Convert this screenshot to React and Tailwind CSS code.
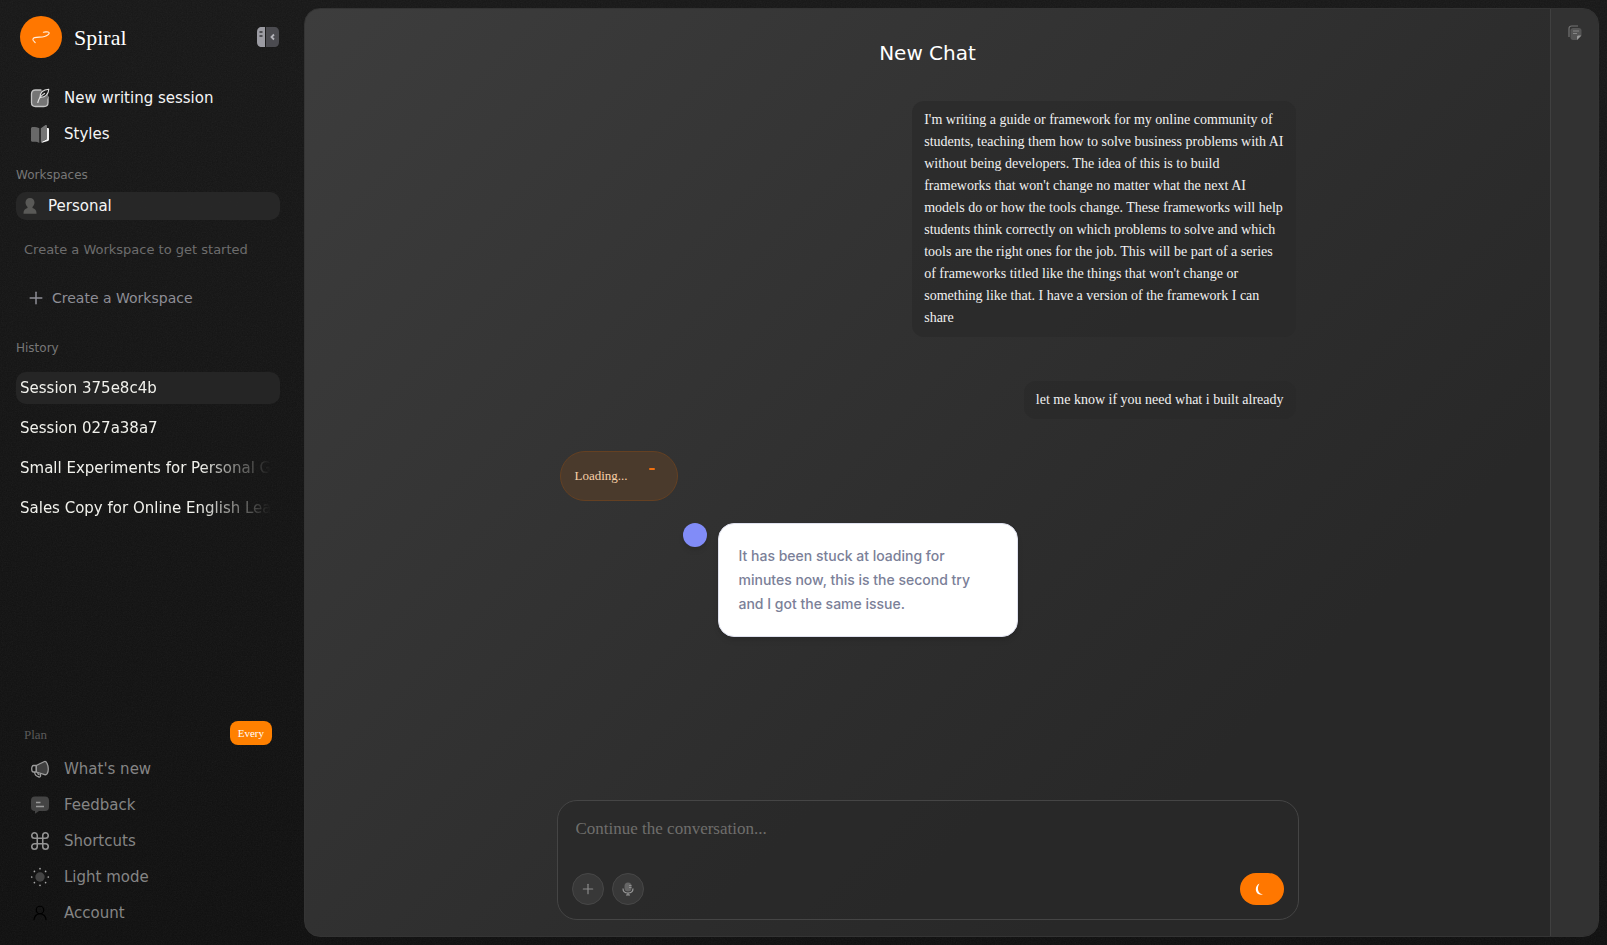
import React from 'react';
import { Command, Plus, UserRound } from 'lucide-react';

function LogoMark() {
  return (
    <span className="flex size-[42px] items-center justify-center rounded-full bg-[#ff7700]">
      <svg width="20" height="16" viewBox="0 0 20 16" fill="none" stroke="#fff1e2" strokeWidth="1.1" strokeLinecap="round" strokeLinejoin="round">
        <path d="M4.2 13.6 2.3 11.5c-.9-1.300-.2-2.500 1.500-2.900 3.200-.7 6.500-.2 9.700-1.100 2-.600 4.400-1.600 4.700-3.300.2-1.200-1.900-1.500-3.400-1.300L12.400 3.300" />
      </svg>
    </span>
  );
}

function CollapseIcon() {
  return (
    <svg width="22" height="20" viewBox="0 0 22 20">
      <path d="M5 0h3v20H5c-3.500 0-5-2-5-5V5c0-3 1.500-5 5-5Z" fill="#9c9ca3" />
      <path d="M9 0h8c3.500 0 5 2 5 5v10c0 3-1.500 5-5 5H9Z" fill="#4b4b50" />
      <path d="M2.500 5h3M2.500 9h3" stroke="#36363a" strokeWidth="1.500" />
      <path d="m17 7.500-2.500 2.500 2.500 2.500" fill="none" stroke="#b4b4ba" strokeWidth="1.800" />
    </svg>
  );
}

function WriteIcon() {
  return (
    <svg width="20" height="20" viewBox="0 0 20 20" fill="none" strokeLinecap="round" strokeLinejoin="round">
      <path d="M11 2H5.500C3 2 1.500 3.500 1.500 6v8.500c0 2.500 1.500 4 4 4H14c2.500 0 4-1.500 4-4V9" fill="#757575" stroke="#c4c4c4" strokeWidth="1.300" />
      <path d="M11 2.500h3l4 4v4H9Z" fill="#757575" />
      <path d="M10 9.500C10 5 13 1.700 18.800 1.300c-.3 4.500-2.800 7.700-8.300 8.200Z" fill="#1c1c1c" stroke="#dedede" strokeWidth="1.100" />
      <path d="M7.800 14.500c1-4 3-7 6.700-9" stroke="#dedede" strokeWidth="1.200" />
    </svg>
  );
}

function BookIcon() {
  return (
    <svg width="20" height="20" viewBox="0 0 20 20">
      <path d="M16.500 4h1.300c.8 0 1.200.4 1.200 1.200v10.600c0 .700-.4 1.100-1.100 1.300l-5.900 1.600-1-1 5.500-2.200Z" fill="#f4f4f4" />
      <path d="M3 3c2.500 0 5 .3 6.300 1.200V19C7.500 17.500 5 17.600 2.200 17.800c-.8 0-1.200-.4-1.200-1.200V4.500C1 3.500 1.800 3 3 3Z" fill="#686868" />
      <path d="m10.800 4.200 4-2.700c1.300-.8 2.200-.3 2.200 1v11c0 1-.4 1.700-1.400 2.200L10.800 18.500Z" fill="#757575" />
    </svg>
  );
}

function PersonIcon() {
  return (
    <svg width="14" height="16" viewBox="0 0 14 16" fill="#595957">
      <path d="M7 0c2.700 0 4.500 1.800 4.500 4.500 0 1.900-.9 3.500-2 4.400v1C12 10.600 13.500 12 13.500 15v.7H.500V15c0-3 1.500-4.400 4-5.100v-1c-1.100-.9-2-2.500-2-4.400C2.500 1.800 4.300 0 7 0Z" />
    </svg>
  );
}

function MegaphoneIcon() {
  return (
    <svg width="20" height="20" viewBox="0 0 20 20" fill="none" stroke="#9b9b9b" strokeWidth="1.300" strokeLinejoin="round">
      <path d="M6.300 6.500 14.500 2.500c1.800-.8 3.800 3.500 3.800 7.500s-1.800 6.300-3.600 5.600L6.300 13Z" fill="#404040" />
      <path d="M6.300 6.500H3.500C2.300 6.500 1.700 8 1.700 9.700S2.300 13 3.500 13h2.800Z" />
      <path d="M4.500 13c.3 2.500 2.300 4.500 4.500 5 1.700.3 2-1.300 1.200-3.500" />
      <path d="M7.500 13.500c.3 1.200 1 2 2 2.500" />
    </svg>
  );
}

function FeedbackIcon() {
  return (
    <svg width="20" height="20" viewBox="0 0 20 20">
      <path d="M5 1.500h10c2.700 0 4 1.300 4 4v6.500c0 2.700-1.300 4-4 4H9l-4 2.700V16c-2.700 0-4-1.300-4-4V5.500c0-2.700 1.300-4 4-4Z" fill="#444" />
      <path d="M6 7.500h4.500M6 11.500h8" stroke="#9a9a9a" strokeWidth="1.300" />
    </svg>
  );
}

function SunIcon() {
  return (
    <svg width="20" height="20" viewBox="0 0 20 20">
      <circle cx="10" cy="10" r="4.700" fill="#444" />
      <path
        d="M10 1.700h0M10 18.300h0M1.700 10h0M18.300 10h0M4.400 4.400h0M15.600 4.400h0M4.400 15.600h0M15.600 15.600h0"
        stroke="#a8a8a8"
        strokeWidth="1.700"
        strokeLinecap="round"
      />
    </svg>
  );
}

function NotesIcon() {
  return (
    <svg width="14" height="16" viewBox="0 0 14 16" fill="none">
      <path d="M1 12V3.500C1 2 2 1 3.500 1H10" stroke="#727272" strokeWidth="1.200" />
      <path d="M5 3h6c1.500 0 2.500 1 2.500 2.500V10L9 15H5c-1.500 0-2.500-1-2.500-2.500v-7C2.500 4 3.500 3 5 3Z" fill="#555" />
      <path d="M5 6h6M5 8.500h4" stroke="#858585" strokeWidth="1" />
      <path d="M13.500 10.500 9 15v-3c0-1 .5-1.500 1.500-1.500Z" fill="#999" />
    </svg>
  );
}

function MicIcon() {
  return (
    <svg width="12" height="14" viewBox="0 0 12 14" fill="none">
      <rect x="2.500" y="0.500" width="7" height="9" rx="3.500" fill="#666" />
      <path d="M7 3.500h2.500M7 5.500h2.500" stroke="#999" strokeWidth="0.800" />
      <path d="M1 6.500c0 2.800 2.100 4.500 5 4.500s5-1.700 5-4.500M6 11v2M4 13h4" stroke="#999" strokeWidth="1.200" />
    </svg>
  );
}

function Grain() {
  return (
    <svg className="pointer-events-none absolute inset-0 size-full opacity-[0.06]" aria-hidden="true">
      <filter id="grain">
        <feTurbulence type="fractalNoise" baseFrequency="0.8" numOctaves="3" stitchTiles="stitch" />
        <feColorMatrix type="saturate" values="0" />
      </filter>
      <rect width="100%" height="100%" filter="url(#grain)" />
    </svg>
  );
}

const mainLinks = [
  { label: 'New writing session', icon: <WriteIcon /> },
  { label: 'Styles', icon: <BookIcon /> },
];

const footerLinks = [
  { label: "What's new", icon: <MegaphoneIcon /> },
  { label: 'Feedback', icon: <FeedbackIcon /> },
  { label: 'Shortcuts', icon: <Command size={22} strokeWidth={1.7} className="shrink-0 text-[#949494]" /> },
  { label: 'Light mode', icon: <SunIcon /> },
  { label: 'Account', icon: <UserRound size={18} strokeWidth={1.6} className="text-black" /> },
];

const sessions = [
  'Session 375e8c4b',
  'Session 027a38a7',
  'Small Experiments for Personal G',
  'Sales Copy for Online English Lea',
];

const firstMessage = [
  "I'm writing a guide or framework for my online community of",
  'students, teaching them how to solve business problems with AI',
  'without being developers. The idea of this is to build',
  "frameworks that won't change no matter what the next AI",
  'models do or how the tools change. These frameworks will help',
  'students think correctly on which problems to solve and which',
  'tools are the right ones for the job. This will be part of a series',
  "of frameworks titled like the things that won't change or",
  'something like that. I have a version of the framework I can',
  'share',
].join('\n');

function NavItem({ icon, label }) {
  return (
    <a href="#" className="flex h-9 items-center gap-3.5 px-3.5">
      <span className="flex size-5 items-center justify-center">{icon}</span>
      {label}
    </a>
  );
}

function Sidebar() {
  return (
    <aside className="relative flex w-[304px] shrink-0 flex-col pr-6 pl-4">
      <div className="flex h-[74px] items-center justify-between pr-px pl-1">
        <a href="#" className="flex items-center gap-3 font-['Liberation_Serif',serif] text-[22px] text-white">
          <LogoMark />
          Spiral
        </a>
        <button aria-label="Collapse sidebar">
          <CollapseIcon />
        </button>
      </div>

      <nav className="mt-1.5 text-[15px] text-[#f5f5f5]">
        {mainLinks.map((link) => (
          <NavItem key={link.label} {...link} />
        ))}
      </nav>

      <h2 className="mt-[15px] text-xs text-[#777]">Workspaces</h2>
      <a href="#" className="mt-[9px] flex h-7 items-center gap-[11px] rounded-[10px] bg-[#292929]/90 px-[7px] text-[15px] text-[#f5f5f5]">
        <PersonIcon />
        Personal
      </a>
      <p className="mt-5 px-2 text-[13px] leading-5 text-[#6d6d6d]">Create a Workspace to get started</p>
      <button className="mt-[26px] flex h-6 items-center gap-1.5 px-2.5 text-sm text-[#8e8e96]">
        <Plus size={20} strokeWidth={1.8} />
        Create a Workspace
      </button>

      <h2 className="mt-[30px] text-xs text-[#777]">History</h2>
      <ul className="mt-4 flex flex-col gap-2">
        {sessions.map((name, i) => (
          <li key={name}>
            <a
              href="#"
              className={`flex h-8 items-center rounded-[10px] px-1 text-[15px] text-[#f1f1ec] ${i === 0 ? 'bg-[#272727]/90' : ''}`}
            >
              <span className="w-[256px] mask-r-from-70% mask-r-to-98% whitespace-nowrap">{name}</span>
            </a>
          </li>
        ))}
      </ul>

      <div className="mt-auto mb-3.5">
        <div className="mb-1.5 flex items-end justify-between px-2 font-['Liberation_Serif',serif]">
          <span className="text-[13px] leading-5 text-[#5a5a5a]">Plan</span>
          <span className="rounded-lg bg-[#ff8000] px-2 text-[11px] leading-6 text-white">Every</span>
        </div>
        <nav className="text-[15px] text-[#858585]">
          {footerLinks.map((link) => (
            <NavItem key={link.label} {...link} />
          ))}
        </nav>
      </div>
    </aside>
  );
}

function UserMessage({ children }) {
  return (
    <p className="self-end rounded-xl bg-[#292929]/70 px-3 py-2 text-sm leading-[22px] whitespace-pre-line text-[#f1f1f1]">
      {children}
    </p>
  );
}

function FeedbackNote() {
  return (
    <div className="mt-[22px] ml-[123px] flex items-start gap-[11px]">
      <span className="size-6 rounded-full bg-[#818cf8] shadow-md" />
      <p className="w-[300px] rounded-2xl border border-[#dfe1ee] bg-white p-5 pt-5 font-['Inter',sans-serif] text-sm leading-6 font-medium text-[#7b8098] shadow-md">
        It has been stuck at loading for minutes now, this is the second try and I got the same issue.
      </p>
    </div>
  );
}

function Composer() {
  return (
    <form className="mb-4 flex h-[120px] w-[742px] flex-col justify-between rounded-[20px] border border-[#454545] bg-[#282828]/60 p-3.5">
      <input
        type="text"
        aria-label="Message"
        placeholder="Continue the conversation..."
        className="w-full px-1 text-[17px] leading-7 text-white outline-none placeholder:text-[#6f6e6c]"
      />
      <div className="flex items-center gap-2">
        <button type="button" aria-label="Add attachment" className="flex size-8 items-center justify-center rounded-full border border-[#474747] bg-[#383838] text-[#8a8a8a]">
          <Plus size={16} strokeWidth={1.8} />
        </button>
        <button type="button" aria-label="Dictate" className="flex size-8 items-center justify-center rounded-full border border-[#474747] bg-[#383838]">
          <MicIcon />
        </button>
        <button type="submit" aria-label="Send" className="ml-auto flex h-8 w-11 items-center rounded-2xl bg-[#ff7700] pl-[15px]">
          <svg width="10" height="12" viewBox="0 0 10 12" fill="#fff">
            <path d="M4.500.5C-.3 2.500-.3 9.500 3.800 11.300c1.300.6 3 .6 4.200 0C2.800 10.800 1.500 5 4.500.5Z" />
          </svg>
        </button>
      </div>
    </form>
  );
}

export default function App() {
  return (
    <div className="relative flex h-screen bg-linear-to-b from-[#171717] to-[#0f0f0f] font-['DejaVu_Sans',sans-serif]">
      <Grain />
      <Sidebar />
      <div className="relative my-2 mr-2 flex min-w-0 flex-1 overflow-hidden rounded-2xl border border-[#343434] bg-linear-[135deg,#3d3d3d_0%,#2d2d2d_55%,#282828_75%,#282828_100%]">
        <main className="flex min-w-0 flex-1 flex-col items-center font-['Liberation_Serif',serif]">
          <h1 className="mt-[30px] font-['DejaVu_Sans',sans-serif] text-xl leading-7 text-white">New Chat</h1>
          <section className="mt-[34px] flex w-[736px] flex-1 flex-col">
            <UserMessage>{firstMessage}</UserMessage>
            <div className="mt-11 flex flex-col">
              <UserMessage>let me know if you need what i built already</UserMessage>
            </div>
            <div className="mt-8 flex h-[50px] w-[118px] items-center justify-between rounded-[25px] border border-[#644022] bg-[#4a3a2c] pr-[22px] pl-3.5 text-[13px] text-[#f6cfa8]">
              Loading...
              <span className="mb-3.5 h-0.5 w-1.5 rounded-full bg-[#f07010]" />
            </div>
            <FeedbackNote />
          </section>
          <Composer />
        </main>
        <aside className="flex w-12 shrink-0 justify-center border-l border-[#404040] bg-[#323232] pt-4">
          <button aria-label="Open drafts" className="h-4">
            <NotesIcon />
          </button>
        </aside>
      </div>
    </div>
  );
}
